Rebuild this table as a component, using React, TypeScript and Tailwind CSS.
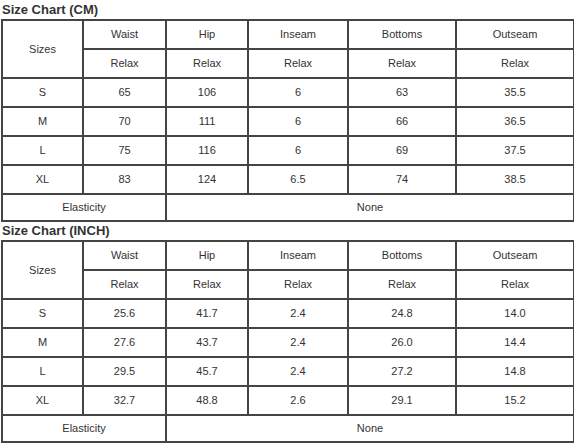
import React from 'react';

type Chart = {
  title: string;
  rows: string[][];
};

const headers = ['Waist', 'Hip', 'Inseam', 'Bottoms', 'Outseam'];

const charts: Chart[] = [
  {
    title: 'Size Chart (CM)',
    rows: [
      ['S', '65', '106', '6', '63', '35.5'],
      ['M', '70', '111', '6', '66', '36.5'],
      ['L', '75', '116', '6', '69', '37.5'],
      ['XL', '83', '124', '6.5', '74', '38.5'],
    ],
  },
  {
    title: 'Size Chart (INCH)',
    rows: [
      ['S', '25.6', '41.7', '2.4', '24.8', '14.0'],
      ['M', '27.6', '43.7', '2.4', '26.0', '14.4'],
      ['L', '29.5', '45.7', '2.4', '27.2', '14.8'],
      ['XL', '32.7', '48.8', '2.6', '29.1', '15.2'],
    ],
  },
];

const cell = 'border-2 border-[#444] h-[29px] p-0 text-center align-middle font-normal';
const lastCell = 'border-2 border-[#444] h-[27px] p-0 text-center align-middle font-normal';

function SizeTable({ chart, first }: { chart: Chart; first: boolean }) {
  return (
    <div>
      <h2
        className={
          first
            ? 'text-[13px] leading-[19px] font-bold text-[#333] pl-[2px]'
            : 'text-[13px] leading-[18px] font-bold text-[#333] pl-[2px]'
        }
      >
        {chart.title}
      </h2>
      <table className="ml-px w-[572px] table-fixed border-collapse border-2 border-[#444] text-[11px] text-[#333]">
        <colgroup>
          <col className="w-[81px]" />
          <col className="w-[83px]" />
          <col className="w-[82px]" />
          <col className="w-[100px]" />
          <col className="w-[108px]" />
          <col className="w-[118px]" />
        </colgroup>
        <tbody>
          <tr>
            <td rowSpan={2} className={cell}>
              Sizes
            </td>
            {headers.map((h) => (
              <td key={h} className={cell}>
                {h}
              </td>
            ))}
          </tr>
          <tr>
            {headers.map((h) => (
              <td key={h} className={cell}>
                Relax
              </td>
            ))}
          </tr>
          {chart.rows.map((row) => (
            <tr key={row[0]}>
              {row.map((v, i) => (
                <td key={i} className={cell}>
                  {v}
                </td>
              ))}
            </tr>
          ))}
          <tr>
            <td colSpan={2} className={lastCell}>
              Elasticity
            </td>
            <td colSpan={4} className={lastCell}>
              None
            </td>
          </tr>
        </tbody>
      </table>
    </div>
  );
}

export default function App() {
  return (
    <div className="w-[574px] h-[444px] bg-white overflow-hidden" style={{ fontFamily: '"Liberation Sans", Arial, sans-serif' }}>
      {charts.map((c, i) => (
        <SizeTable key={c.title} chart={c} first={i === 0} />
      ))}
    </div>
  );
}
